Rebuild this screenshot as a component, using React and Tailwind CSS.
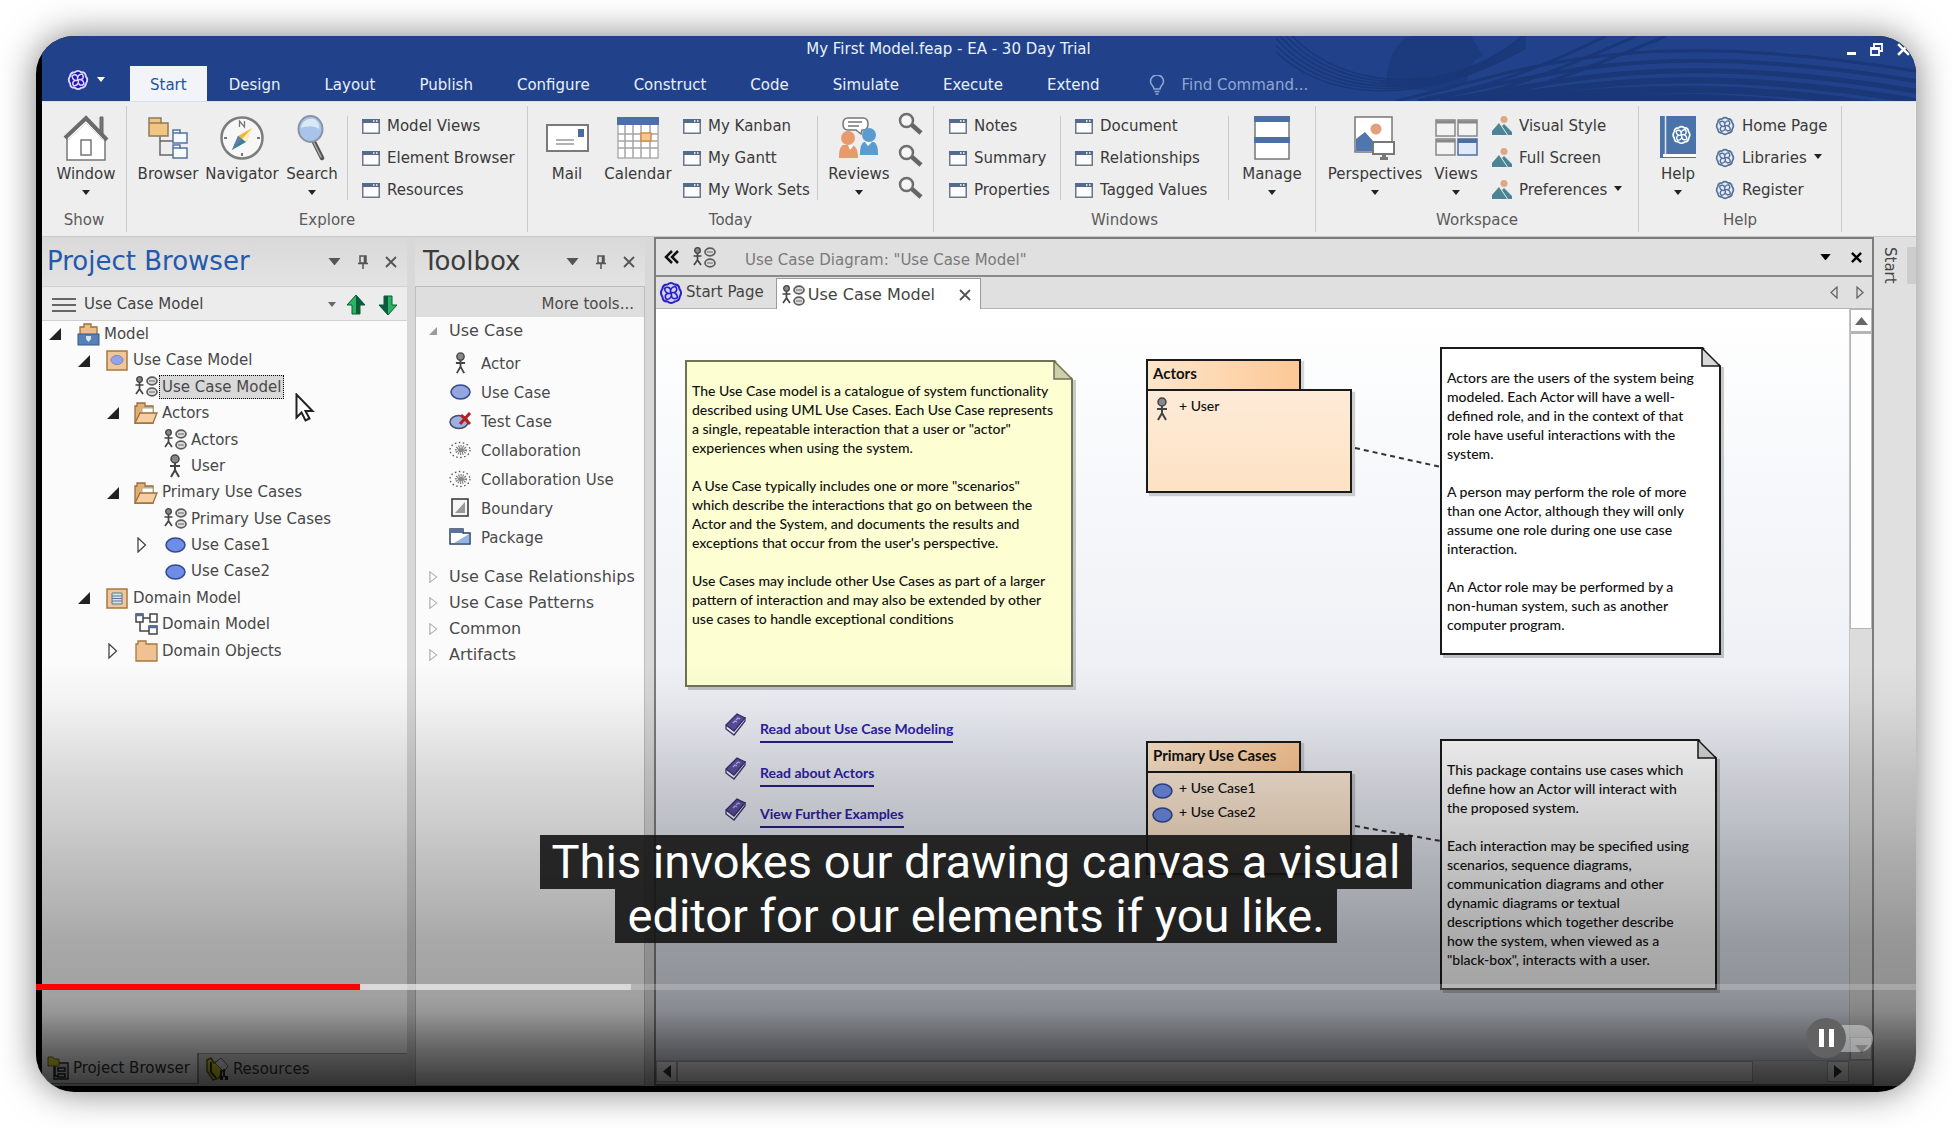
import React from "react";

/* ---------- icons ---------- */

const KnotShape = ({ color, bg = "none" }) => (
  <g fill="none" stroke={color} strokeLinecap="round">
    <path
      fill={bg}
      strokeWidth="2"
      strokeLinejoin="round"
      d="M8.500 3.500Q12 .5 15.500 3.500Q20 3.200 20.500 8Q23.500 11.500 20.800 15.500Q20.500 20 15.800 20.500Q12 23.500 8.500 20.500Q3.500 20.500 3.500 16Q.5 12 3.300 8Q3.800 3.500 8.500 3.500z"
    />
    {[0, 90, 180, 270].map((a) => (
      <path key={a} transform={`rotate(${a} 12 12)`} strokeWidth="1.700" d="M12 12C10.500 8.500 12.500 6 16.500 5.500C18.500 8 18 10.500 15.500 11.500" />
    ))}
  </g>
);

const Knot = ({ color = "#44648f", bg = "none", size = 22 }) => (
  <svg width={size} height={size} viewBox="0 0 24 24">
    <KnotShape color={color} bg={bg} />
  </svg>
);

const Caret = ({ className = "", w = 8, color = "#222" }) => (
  <svg className={className} width={w} height={w / 2 + 1} viewBox="0 0 8 5">
    <path d="M0 0h8L4 5z" fill={color} />
  </svg>
);

const House = () => (
  <svg width="46" height="46" viewBox="0 0 46 46">
    <path d="M37 2h3v18h-3z" fill="#777" stroke="#666" />
    <path d="M4 22 23 5l19 19v21H4z" fill="#fff" stroke="#777" strokeWidth="1.500" />
    <path d="M2 23 23 3l21 22" fill="none" stroke="#6b6b6b" strokeWidth="4" />
    <path d="M5 25 23 8l18 18" fill="none" stroke="#ddd" strokeWidth="1" />
    <rect x="18" y="25" width="10" height="15" fill="#fff" stroke="#777" strokeWidth="1.500" />
  </svg>
);

const BrowserIcon = () => (
  <svg width="40" height="42" viewBox="0 0 40 42">
    <path d="M12 18v20h14M12 24h14" fill="none" stroke="#666" strokeWidth="1.500" />
    <path d="M1 1h12v5h7v13H1z" fill="#f2c583" stroke="#8f7a5b" strokeWidth="1.500" />
    <path d="M1 6h12" stroke="#8f7a5b" strokeWidth="1.500" />
    <path d="M25 13h7v3h7v10H25zM25 28h7v3h7v10H25z" fill="#f6f9ff" stroke="#56739f" strokeWidth="1.500" />
    <path d="M25 16h8M25 31h8" stroke="#56739f" strokeWidth="1.500" />
  </svg>
);

const Compass = () => (
  <svg width="44" height="44" viewBox="0 0 44 44">
    <circle cx="22" cy="22" r="20.500" fill="#f7f7f7" stroke="#7d7d7d" strokeWidth="2.500" />
    <path d="M19.500 11V5l5 6V5" fill="none" stroke="#777" strokeWidth="1.300" />
    <path d="M4 22h3M37 22h3M22 37v3" stroke="#777" strokeWidth="2" />
    <path d="M32 12 26 26l-8-6z" fill="#f0b63c" />
    <path d="M32 12 26 26l-4-3z" fill="#fff1b8" />
    <path d="M12 34l6-14 8 6z" fill="#3e7f97" />
    <path d="M12 34l6-14 4 3z" fill="#5d7fae" />
  </svg>
);

const SearchBig = () => (
  <svg width="30" height="46" viewBox="0 0 30 46">
    <path d="m17 27 8 16" stroke="#555" strokeWidth="4.500" strokeLinecap="round" />
    <path d="m17 28 7 14" stroke="#aaa" strokeWidth="1.500" strokeLinecap="round" />
    <ellipse cx="13.500" cy="14" rx="12" ry="13" fill="#a9c4e8" stroke="#8a93a3" strokeWidth="2" />
    <path d="M4 13C5 6 11 3 17 4c4 2 6 6 5 10-6-4-12-3-18-1z" fill="#dbe8f8" />
  </svg>
);

const Mail = () => (
  <svg width="43" height="28" viewBox="0 0 43 28">
    <rect x="1" y="1" width="41" height="26" fill="#fff" stroke="#7a7a7a" strokeWidth="2" />
    <rect x="32" y="5" width="6" height="8" fill="#4a6c9f" />
    <path d="M10 16h18M10 20h18" stroke="#999" strokeWidth="1.500" />
  </svg>
);

const CalendarIcon = () => (
  <svg width="42" height="42" viewBox="0 0 42 42">
    <rect x="1" y="1" width="40" height="40" fill="#fff" stroke="#8c8c8c" />
    <rect width="42" height="8" fill="#4c70a6" />
    <path d="M8 8v33M16 8v33M24 8v33M33 8v33M1 17h40M1 24h40M1 31h40" stroke="#a5a5a5" strokeWidth="1.500" />
    <rect x="24" y="16" width="10" height="8" fill="#f5c68e" stroke="#d18f4f" strokeWidth="1.500" />
  </svg>
);

const Reviews = () => (
  <svg width="40" height="42" viewBox="0 0 40 42">
    <path d="M9 1h15q5 0 5 6t-5 6h-1l-1 4-5-4H9q-5 0-5-6t5-6z" fill="#fff" stroke="#777" strokeWidth="1.500" />
    <path d="M9 5h14M9 9h11" stroke="#777" strokeWidth="1.500" />
    <path d="M21 38c0-8 1-11 4-13h10c3 2 4 5 4 13z" fill="#5a9bd0" />
    <circle cx="30" cy="18" r="7" fill="#5a9bd0" />
    <path d="M0 41c0-8 1-11 4-13h10c3 2 5 5 5 13z" fill="#e79a6c" />
    <circle cx="9" cy="21" r="7" fill="#e79a6c" />
    <path d="m9 28 2 5 4-5M26 25l3 4 4-4" fill="#fff" />
  </svg>
);

const Lens = () => (
  <svg width="25" height="24" viewBox="0 0 25 24">
    <circle cx="8.500" cy="8.500" r="6.500" fill="#f6f6f6" stroke="#6e6e6e" strokeWidth="2.500" />
    <path d="m14 13 9 8" stroke="#666" strokeWidth="4.500" />
  </svg>
);

const ManageIcon = () => (
  <svg width="36" height="44" viewBox="0 0 36 44">
    <rect x="1" y="1" width="34" height="42" fill="#fff" stroke="#777" strokeWidth="1.500" />
    <path d="M0 0h36v6H0zM0 21h36v6H0z" fill="#4c70a6" />
  </svg>
);

const Perspectives = () => (
  <svg width="42" height="44" viewBox="0 0 42 44">
    <rect x="1" y="1" width="37" height="35" fill="#fff" stroke="#777" strokeWidth="1.500" />
    <circle cx="22" cy="13" r="5.500" fill="#e2a07c" />
    <path d="M2 35V23l9-7 8 9v10z" fill="#4f76ad" />
    <rect x="19" y="26" width="21" height="12" fill="#fff" stroke="#777" strokeWidth="2" />
    <path d="M28 38h4v3h2v3h-8v-3h2z" fill="#777" />
  </svg>
);

const ViewsIcon = () => (
  <svg width="43" height="38" viewBox="0 0 43 38">
    {[[1, 1], [23, 1], [1, 20]].map(([x, y]) => (
      <g key={`${x}-${y}`}>
        <rect x={x} y={y} width="19" height="16" fill="#f3f3f3" stroke="#888" strokeWidth="1.500" />
        <path d={`M${x} ${y + 2}h19`} stroke="#888" strokeWidth="3" />
      </g>
    ))}
    <rect x="23" y="20" width="19" height="16" fill="#dfeaf8" stroke="#4c6ea3" strokeWidth="1.500" />
    <path d="M23 22h19" stroke="#4c6ea3" strokeWidth="4" />
  </svg>
);

const HelpBook = () => (
  <svg width="36" height="44" viewBox="0 0 36 44">
    <path d="M0 0h36v42H0z" fill="#4a74a9" />
    <path d="M5.500 0v38" stroke="#dfe8f4" strokeWidth="1.500" />
    <path d="M3 38h33v3H3z" fill="#fff" />
    <g transform="translate(11.500 9) scale(.83)"><KnotShape color="#fff" /></g>
  </svg>
);

const WinIcon = () => (
  <svg width="18" height="15" viewBox="0 0 18 15">
    <rect x=".75" y=".75" width="16.500" height="13.500" fill="#fafcff" stroke="#6e7785" strokeWidth="1.500" />
    <path d="M0 0h18v4H0z" fill="#566b8c" />
    <path d="M11 2h1.500M14 2h1.500" stroke="#fff" strokeWidth="1.500" />
  </svg>
);

const Scene = () => (
  <svg width="20" height="20" viewBox="0 0 20 20">
    <circle cx="12" cy="3.500" r="3.500" fill="#dda884" />
    <path d="M0 19v-4l7-8 8 12z" fill="#4b8495" />
    <path d="m10 10 2-2 8 8v3h-4z" fill="#4b8495" />
  </svg>
);

const Pin = () => (
  <svg width="12" height="14" viewBox="0 0 12 14" fill="none" stroke="#555" strokeWidth="1.500">
    <path d="M3 1h6v7H3zM1 8.500h10M6 9v5M7.500 1v7" />
  </svg>
);

const Cross = ({ size = 12, color = "#555", sw = 1.8 }) => (
  <svg width={size} height={size} viewBox="0 0 12 12" stroke={color} strokeWidth={sw}>
    <path d="m1 1 10 10M11 1 1 11" />
  </svg>
);

const GreenArrow = ({ down }) => (
  <svg width="20" height="22" viewBox="0 0 20 22">
    <g transform={down ? "rotate(180 10 11)" : undefined}>
      <path d="M10 1 1 11h5v9h8v-9h5z" fill="#27b565" stroke="#0a5c36" strokeWidth="1" />
      <path d="M10 1 19 11h-5v9h-4z" fill="#0a5c3a" />
    </g>
  </svg>
);

const Root = () => (
  <svg width="23" height="23" viewBox="0 0 23 23">
    <path d="M3 12V4h4V1h7v3h6v8z" fill="#ecbd88" stroke="#9a6f3b" strokeWidth="1.300" />
    <rect x="1" y="11" width="21" height="11" fill="#5580b8" stroke="#36588a" />
    <path d="M9 13h5v3l-2.500 3L9 16z" fill="#d7e4f5" />
  </svg>
);

const BoxIcon = ({ doc }) => (
  <svg width="22" height="21" viewBox="0 0 22 21">
    <rect x="1" y="1" width="20" height="19" fill="#f0c597" stroke="#a67843" strokeWidth="1.500" />
    {doc ? (
      <path d="M6 5h10v11H6zM6 8h10M6 10.500h10M6 13h10" fill="#d5e3ee" stroke="#587991" />
    ) : (
      <ellipse cx="11" cy="10" rx="6" ry="4.500" fill="#94a4ea" stroke="#7a85c4" />
    )}
  </svg>
);

const UseCaseDiagramIcon = () => (
  <svg width="23" height="21" viewBox="0 0 23 21" fill="none">
    <circle cx="4.500" cy="3.500" r="2.800" fill="#888" stroke="#444" strokeWidth="1.300" />
    <path d="M4.500 6.500V13M.5 9h8M4.500 13 1 18M4.500 13l3.500 5" stroke="#444" strokeWidth="1.700" />
    <ellipse cx="17" cy="5" rx="5" ry="3.800" fill="#ddd" stroke="#5c5c5c" strokeWidth="1.700" />
    <ellipse cx="17" cy="16" rx="5" ry="3.800" fill="#ddd" stroke="#5c5c5c" strokeWidth="1.700" />
    <path d="M14 5h6M14 16h6" stroke="#666" />
  </svg>
);

const OpenFolder = () => (
  <svg width="24" height="22" viewBox="0 0 24 22">
    <path d="M1 21V4h2V1h8v3h8v17z" fill="#e3ae72" stroke="#9a6f3b" strokeWidth="1.300" />
    <path d="M8 6h11v8H8z" fill="#fff" stroke="#aaa" />
    <path d="m1 21 5-10h17l-4 10z" fill="#f5cfa2" stroke="#9a6f3b" strokeWidth="1.300" />
  </svg>
);

const Folder = () => (
  <svg width="23" height="22" viewBox="0 0 23 22">
    <path d="M1 21V4h2V1h8v3h11v17z" fill="#f0c293" stroke="#a67843" strokeWidth="1.300" />
  </svg>
);

const Person = ({ h = 24 }) => (
  <svg width={h / 2} height={h} viewBox="0 0 12 24" fill="none">
    <circle cx="6" cy="5" r="4" fill="#888" stroke="#444" strokeWidth="1.500" />
    <path d="M6 9v7M1 12h10M6 16l-4 7M6 16l4 7" stroke="#444" strokeWidth="2" />
  </svg>
);

const Oval = ({ fill = "#6d8de6" }) => (
  <svg width="21" height="16" viewBox="0 0 21 16">
    <ellipse cx="10.500" cy="8" rx="9.500" ry="7" fill={fill} stroke="#34488f" strokeWidth="1.500" />
  </svg>
);

const TestCase = () => (
  <svg width="23" height="18" viewBox="0 0 23 18">
    <ellipse cx="10" cy="10" rx="9" ry="6.500" fill="#9bb2e0" stroke="#444c66" strokeWidth="1.500" />
    <path d="m12 3 9 9M21 1 11 12" stroke="#b81f1f" strokeWidth="3" />
  </svg>
);

const Collab = () => (
  <svg width="22" height="18" viewBox="0 0 22 18">
    <ellipse cx="11" cy="9" rx="10" ry="7.500" fill="none" stroke="#555" strokeWidth="1.300" strokeDasharray="1.500 2.500" />
    <ellipse cx="12" cy="9" rx="3" ry="2" fill="#888" />
    <ellipse cx="12" cy="9" rx="4.500" ry="3.500" fill="none" stroke="#777" strokeWidth="3" strokeDasharray="1 1" />
  </svg>
);

const Boundary = () => (
  <svg width="18" height="19" viewBox="0 0 18 19">
    <rect x="1" y="1" width="16" height="17" fill="#f5f5f5" stroke="#333" strokeWidth="1.500" />
    <path d="M4 15 14 4v11z" fill="#999" />
  </svg>
);

const PackageIcon = () => (
  <svg width="22" height="17" viewBox="0 0 22 17">
    <path d="M1 1h13v4h7v11H1z" fill="#fff" stroke="#2b4168" strokeWidth="1.500" />
    <path d="M1 1h13v4H1z" fill="#5a739c" />
    <path d="M5 15 20 6v9z" fill="#93b5e4" />
  </svg>
);

const ClassDiagram = () => (
  <svg width="23" height="22" viewBox="0 0 23 22" fill="#fff" stroke="#444" strokeWidth="1.500">
    <path d="M8 5h8M5 9v9h9" fill="none" />
    <path d="M1 1h7v8H1zM15 1h7v8h-7zM14 13h8v8h-8z" />
    <path d="M1 2h7M14 14h8" stroke="#4c6ea3" strokeWidth="2.500" />
  </svg>
);

const BookIcon = () => (
  <svg width="21" height="23" viewBox="0 0 21 23">
    <path d="M1 13v3l8 6L20 8V5z" fill="#f4f4fa" stroke="#3a3470" strokeWidth="1.300" />
    <path d="M1 12 12 1l8 4L9 18z" fill="#5b509f" stroke="#37306f" strokeWidth="1.300" />
    <path d="m8 10 2-2 2 1M11 7l2-2 2 1" fill="none" stroke="#b8b2e0" strokeWidth="1.300" />
  </svg>
);

const Expander = ({ open, light }) => {
  if (open) {
    const s = light ? 8 : 12;
    return <svg width={s} height={s} viewBox="0 0 12 12"><path d="M12 0v12H0z" fill={light ? "#9a9a9a" : "#222"} /></svg>;
  }
  return (
    <svg width={light ? 9 : 10} height={light ? 12 : 16} viewBox="0 0 10 16" preserveAspectRatio="none">
      <path d="m1 1 7.500 7L1 15z" fill="#fff" stroke={light ? "#aaa" : "#444"} strokeWidth="1.300" />
    </svg>
  );
};

/* ---------- ribbon ---------- */

const BigButton = ({ icon, label, arrow, className }) => (
  <button className={`flex h-full shrink-0 flex-col items-center pt-2 ${className}`}>
    <span className="flex h-12 items-center justify-center">{icon}</span>
    <span className="leading-6 whitespace-nowrap">{label}</span>
    {arrow && <Caret className="mt-1" />}
  </button>
);

const SmallList = ({ items, className = "" }) => (
  <div className={`flex shrink-0 flex-col pt-1 ${className}`}>
    {items.map(([icon, label, arrow]) => (
      <button key={label} className="flex h-8 items-center gap-[7px] whitespace-nowrap">
        {icon}
        <span>{label}</span>
        {arrow && <Caret className="mb-1" />}
      </button>
    ))}
  </div>
);

const Divider = () => <div className="mt-[10px] h-[84px] w-px shrink-0 bg-[#c9c9c9]" />;

const Group = ({ label, className, children }) => (
  <section className={`my-1 flex shrink-0 flex-col border-r border-[#cccccc] ${className}`}>
    <div className="flex h-[102px]">{children}</div>
    <h2 className="text-center leading-6 text-[#5a5a5a]">{label}</h2>
  </section>
);

const win = <WinIcon />;
const knot = <Knot size={20} color="#54719b" bg="#e6edf7" />;

function Ribbon() {
  return (
    <div className="flex h-[135px] shrink-0 overflow-hidden border-t border-[#d5e0f5] bg-[#eeeeee] text-[#3a3a3a]">
      <Group label="Show" className="w-[85px]">
        <BigButton icon={<House />} label="Window" arrow className="w-[88px]" />
      </Group>
      <Group label="Explore" className="w-[401px]">
        <BigButton icon={<BrowserIcon />} label="Browser" className="ml-[6px] w-[70px]" />
        <BigButton icon={<Compass />} label="Navigator" className="w-[78px]" />
        <BigButton icon={<SearchBig />} label="Search" arrow className="mr-1 w-[62px]" />
        <Divider />
        <SmallList className="ml-[14px]" items={[[win, "Model Views"], [win, "Element Browser"], [win, "Resources"]]} />
      </Group>
      <Group label="Today" className="w-[406px]">
        <BigButton icon={<Mail />} label="Mail" className="ml-[5px] w-[68px]" />
        <BigButton icon={<CalendarIcon />} label="Calendar" className="w-[74px]" />
        <SmallList className="ml-2 w-[134px]" items={[[win, "My Kanban"], [win, "My Gantt"], [win, "My Work Sets"]]} />
        <Divider />
        <BigButton icon={<Reviews />} label="Reviews" arrow className="ml-[2px] w-[78px]" />
        <div className="flex flex-col pt-[2px]">
          {["Find reviews", "Find discussions", "Find comments"].map((l) => (
            <button key={l} aria-label={l} className="flex h-8 items-center"><Lens /></button>
          ))}
        </div>
      </Group>
      <Group label="Windows" className="w-[382px]">
        <SmallList className="ml-[15px] w-[111px]" items={[[win, "Notes"], [win, "Summary"], [win, "Properties"]]} />
        <Divider />
        <SmallList className="ml-[14px] w-[153px]" items={[[win, "Document"], [win, "Relationships"], [win, "Tagged Values"]]} />
        <Divider />
        <BigButton icon={<ManageIcon />} label="Manage" arrow className="w-[86px]" />
      </Group>
      <Group label="Workspace" className="w-[323px]">
        <BigButton icon={<Perspectives />} label="Perspectives" arrow className="ml-[7px] w-[104px]" />
        <BigButton icon={<ViewsIcon />} label="Views" arrow className="w-[58px]" />
        <SmallList className="ml-[7px]" items={[[<Scene />, "Visual Style"], [<Scene />, "Full Screen"], [<Scene />, "Preferences", true]]} />
      </Group>
      <Group label="Help" className="w-[203px]">
        <BigButton icon={<HelpBook />} label="Help" arrow className="ml-[9px] w-[60px]" />
        <SmallList className="ml-[7px]" items={[[knot, "Home Page"], [knot, "Libraries", true], [knot, "Register"]]} />
      </Group>
    </div>
  );
}

/* ---------- title bar ---------- */

const Waves = () => (
  <svg className="absolute top-0 right-0 h-full w-[640px]" viewBox="0 0 640 65" preserveAspectRatio="none" fill="none" stroke="#1a3777">
    <path d="M110 50Q112 8 135 0h60q6 10 12 20-14 4-16 26-20 10-30 10z" fill="#1c3b7e" stroke="none" />
    {[0, 6, 12, 18, 24, 30].map((d) => (
      <path key={d} d={`M${-14 + d} 0C${40 + d} ${72 - d / 2} ${150 + d} ${70 - d / 3} 250 ${12 - d / 2}`} strokeWidth="1.500" />
    ))}
    {[0, 1, 2, 3, 4, 5].map((d) => (
      <path key={d} d={`M${120 + d * 22} 65C${240 + d * 22} ${38 + d * 5} ${340 + d * 20} ${-14 + d * 13} 640 ${35 + d * 10}`} strokeWidth={3 + d} />
    ))}
    <path d="M150 62Q230 50 330 0M180 64Q250 50 360 0M210 65Q270 50 390 0" strokeWidth="3" />
  </svg>
);

const menus = ["Design", "Layout", "Publish", "Configure", "Construct", "Code", "Simulate", "Execute", "Extend"];

function TitleBar() {
  return (
    <header className="relative flex h-[65px] shrink-0 flex-col justify-between overflow-hidden bg-[#21428a] text-[#e8f0fb]">
      <Waves />
      <div className="relative flex h-[26px] items-center pr-[6px]">
        <h1 className="flex-1 pl-2 text-center">My First Model.feap - EA - 30 Day Trial</h1>
        <div className="flex items-center gap-[14px]">
          <button aria-label="Minimize" className="mt-2 h-[3px] w-[9px] bg-white" />
          <button aria-label="Restore">
            <svg width="13" height="13" viewBox="0 0 13 13" fill="none" stroke="#fff" strokeWidth="1.800"><path d="M4 4V1h8v7H9M1 5h8v7H1zM1 6h8" /></svg>
          </button>
          <button aria-label="Close"><Cross size={13} color="#fff" sw={2.4} /></button>
        </div>
      </div>
      <div className="relative flex h-[35px]">
        <button aria-label="Application menu" className="flex w-[88px] items-center gap-2 pb-2 pl-[25px]">
          <Knot size={22} color="#dcd8ff" bg="#2014b4" />
          <Caret color="#fff" />
        </button>
        <nav className="flex">
          <button className="bg-[#f2f4f8] px-5 pt-[3px] text-[#1d559f]">Start</button>
          {menus.map((m) => <button key={m} className="px-[22px] pt-[3px]">{m}</button>)}
        </nav>
        <label className="ml-7 flex items-center gap-4 pt-[3px] text-[#8fa6d3]">
          <svg width="16" height="20" viewBox="0 0 16 20" fill="none" stroke="#8fa6d3" strokeWidth="1.500"><path d="M5 14C5 11 1.500 10 1.500 6.500a6 6 0 0 1 13 0C14.500 10 11 11 11 14zM5.500 16.500h5M6.500 19h3" /></svg>
          <input aria-label="Find Command" placeholder="Find Command..." className="w-[160px] bg-transparent outline-none placeholder:text-[#8fa6d3]" />
        </label>
      </div>
    </header>
  );
}

/* ---------- docked panels ---------- */

const PanelHeader = ({ title, className }) => (
  <div className="flex h-[49px] shrink-0 items-center bg-gradient-to-b from-[#d9d9d9] to-[#e3e3e3]">
    <h2 className={`flex-1 text-[26px] whitespace-nowrap ${className}`}>{title}</h2>
    <div className="flex items-center gap-4 pr-[10px]">
      <button aria-label="Panel options"><Caret w={13} color="#555" /></button>
      <button aria-label="Pin panel"><Pin /></button>
      <button aria-label="Close panel"><Cross /></button>
    </div>
  </div>
);

const tree = [
  [0, "open", <Root />, "Model"],
  [1, "open", <BoxIcon />, "Use Case Model"],
  [2, "", <UseCaseDiagramIcon />, "Use Case Model", true],
  [2, "open", <OpenFolder />, "Actors"],
  [3, "", <UseCaseDiagramIcon />, "Actors"],
  [3, "", <Person />, "User"],
  [2, "open", <OpenFolder />, "Primary Use Cases"],
  [3, "", <UseCaseDiagramIcon />, "Primary Use Cases"],
  [3, "closed", <Oval />, "Use Case1"],
  [3, "", <Oval />, "Use Case2"],
  [1, "open", <BoxIcon doc />, "Domain Model"],
  [2, "", <ClassDiagram />, "Domain Model"],
  [2, "closed", <Folder />, "Domain Objects"],
];

function ProjectBrowser() {
  return (
    <aside className="flex w-[365px] shrink-0 flex-col bg-[#fbfbfb]">
      <PanelHeader title="Project Browser" className="pl-[5px] text-[#2358ad]" />
      <div className="flex h-[35px] shrink-0 items-center border-y border-[#d0d0d0] bg-[#ececec] pt-[2px] pl-[10px] text-[#444]">
        <button aria-label="Menu" className="flex w-6 flex-col gap-1">
          <span className="h-[2px] bg-[#666]" /><span className="h-[2px] bg-[#666]" /><span className="h-[2px] bg-[#666]" />
        </button>
        <button className="flex flex-1 items-center justify-between pl-2">Use Case Model<Caret color="#666" /></button>
        <button aria-label="Move up" className="ml-[10px]"><GreenArrow /></button>
        <button aria-label="Move down" className="mr-[9px] ml-3"><GreenArrow down /></button>
      </div>
      <ul className="flex h-[343px] shrink-0 flex-col text-[#484848]">
        {tree.map(([level, state, icon, label, selected], i) => (
          <li key={i} className="flex flex-1 items-center" style={{ paddingLeft: level * 29 }}>
            <span className="mr-[7px] flex w-[26px] justify-center">{state && <Expander open={state === "open"} />}</span>
            <span className="flex w-[26px] items-center justify-center">{icon}</span>
            <span className={selected ? "border border-dotted border-black bg-[#d9d9d9] px-[2px] leading-[22px]" : "pl-[3px]"}>{label}</span>
          </li>
        ))}
      </ul>
      <div className="flex-1" />
      <div className="flex h-[33px] shrink-0 bg-[#dcdcdc] text-[#333]">
        <button className="mb-[2px] flex items-center gap-1 border-r-2 border-b border-[#999] bg-[#fbfbfb] pr-[7px] pl-[5px]">
          <svg width="22" height="24" viewBox="0 0 22 24"><path d="M7 7h14v16H7z" fill="#c9d6f2" stroke="#333" strokeWidth="1.500" /><path d="M11 12h7v3h-7zM11 18h7v3h-7zM8 9v11h3" fill="#e8eefb" stroke="#222" strokeWidth="1.500" /><path d="M1 1h5l1 2h5v7H1z" fill="#e3d93c" stroke="#77701a" /></svg>
          Project Browser
        </button>
        <button className="flex flex-1 items-center gap-1 border-t border-[#aaa] pb-[2px] pl-[7px]">
          <svg width="23" height="24" viewBox="0 0 23 24"><path d="M1 3 5 1l3 5 4-2 5 9-4 8-6 2L1 14z" fill="#d9cf33" stroke="#625b12" strokeWidth="1.500" /><path d="m9 6 6-5 7 8-4 6z" fill="#e8e8f2" stroke="#666" /><path d="M5 5v10l5 6M18 12v8M15 13v6" stroke="#222" strokeWidth="1.800" fill="none" /><path d="M14 21h3M19 21h3" stroke="#222" strokeWidth="4" /></svg>
          Resources
        </button>
      </div>
    </aside>
  );
}

const tools = [
  [<Person h={22} />, "Actor"],
  [<Oval fill="#93a7de" />, "Use Case"],
  [<TestCase />, "Test Case"],
  [<Collab />, "Collaboration"],
  [<Collab />, "Collaboration Use"],
  [<Boundary />, "Boundary"],
  [<PackageIcon />, "Package"],
];

function Toolbox() {
  return (
    <aside className="ml-2 flex w-[230px] shrink-0 flex-col bg-[#fbfbfb] text-[#4a4a4a]">
      <PanelHeader title="Toolbox" className="pl-2 text-[#3c3c3c]" />
      <div className="flex min-h-0 flex-1 flex-col overflow-hidden border border-[#bdbdbd] bg-[#fbfbfb]">
        <button className="flex h-[30px] shrink-0 items-center justify-end bg-[#dedede] pt-1 pr-[10px]">More tools...</button>
        <button className="flex h-[28px] shrink-0 items-center text-[16px]">
          <span className="ml-[13px] w-5"><Expander open light /></span>Use Case
        </button>
        <ul className="pt-[5px] pb-[11px]">
          {tools.map(([icon, label]) => (
            <li key={label}>
              <button className="flex h-[29px] items-center">
                <span className="ml-8 flex w-6 justify-center pb-1">{icon}</span>
                <span className="pl-[9px]">{label}</span>
              </button>
            </li>
          ))}
        </ul>
        {["Use Case Relationships", "Use Case Patterns", "Common", "Artifacts"].map((t) => (
          <button key={t} className="flex h-[26px] shrink-0 items-center text-[16px] whitespace-nowrap">
            <span className="ml-[13px] w-5 shrink-0"><Expander light /></span>{t}
          </button>
        ))}
      </div>
    </aside>
  );
}

/* ---------- diagram ---------- */

const Note = ({ className, fill, stroke, fold, children }) => (
  <article className={`absolute font-['Lato',sans-serif] text-[14px] leading-[19px] font-medium text-[#111] ${className}`}>
    <svg className="absolute inset-0 size-full overflow-visible" aria-hidden="true">
      <rect x="3" y="20" width="100%" height="calc(100% - 17px)" fill="#000" opacity=".2" />
    </svg>
    <div className={`absolute inset-0 border-2 [clip-path:polygon(0_0,calc(100%-18px)_0,100%_19px,100%_100%,0_100%)] ${fill}`} />
    <svg className="absolute top-0 right-0" width="20" height="20" viewBox="0 0 20 20">
      <path d="M1 1v18h18z" fill={fold} stroke={stroke} strokeWidth="1.500" />
    </svg>
    <div className="relative pt-[21px] pl-[7px] whitespace-pre">{children}</div>
  </article>
);

const Package = ({ title, className, children }) => (
  <article className={`absolute w-[206px] font-['Lato',sans-serif] text-[#111] ${className}`}>
    <h3 className="h-[30px] w-[155px] border-2 border-b-0 border-[#1a1a1a] bg-gradient-to-r from-[#fde6cc] to-[#fcc895] pl-[5px] text-[15px] leading-[25px] font-bold shadow-[3px_2px_1px_rgba(0,0,0,0.15)]">{title}</h3>
    <ul className="h-[104px] border-2 border-[#1a1a1a] bg-gradient-to-b from-[#fdebd8] to-[#fde2c4] pt-[2px] pl-[3px] text-[14px] font-medium shadow-[3px_3px_1px_rgba(0,0,0,0.18)]">{children}</ul>
  </article>
);

const Member = ({ icon, label }) => (
  <li className="flex h-6 items-center">
    <span className="flex w-[22px] justify-center pt-2">{icon}</span>
    <span className="pl-[6px]">+ {label}</span>
  </li>
);

const noteUseCases = `The Use Case model is a catalogue of system functionality
described using UML Use Cases. Each Use Case represents
a single, repeatable interaction that a user or "actor"
experiences when using the system.

A Use Case typically includes one or more "scenarios"
which describe the interactions that go on between the
Actor and the System, and documents the results and
exceptions that occur from the user's perspective.

Use Cases may include other Use Cases as part of a larger
pattern of interaction and may also be extended by other
use cases to handle exceptional conditions`;

const noteActors = `Actors are the users of the system being
modeled. Each Actor will have a well-
defined role, and in the context of that
role have useful interactions with the
system.

A person may perform the role of more
than one Actor, although they will only
assume one role during one use case
interaction.

An Actor role may be performed by a
non-human system, such as another
computer program.`;

const notePrimary = `This package contains use cases which
define how an Actor will interact with
the proposed system.

Each interaction may be specified using
scenarios, sequence diagrams,
communication diagrams and other
dynamic diagrams or textual
descriptions which together describe
how the system, when viewed as a
"black-box", interacts with a user.`;

const DocLink = ({ className, children }) => (
  <a href="#docs" className={`absolute flex items-start gap-[14px] font-['Lato',sans-serif] text-[14px] leading-5 font-bold text-[#2f21a8] ${className}`}>
    <BookIcon />
    <span className="mt-[6px] border-b-2 border-[#2a2080] pb-[2px] whitespace-nowrap">{children}</span>
  </a>
);

const Canvas = () => (
  <div className="relative min-w-0 flex-1 overflow-hidden bg-gradient-to-b from-[#ffffff] to-[#dce1ec]">
    <Note className="top-[51px] left-[29px] h-[327px] w-[388px]" fill="border-[#6f7355] bg-[#fdffd3]" fold="#cdd0aa" stroke="#6f7355">{noteUseCases}</Note>
    <DocLink className="top-[404px] left-[69px]">Read about Use Case Modeling</DocLink>
    <DocLink className="top-[448px] left-[69px]">Read about Actors</DocLink>
    <DocLink className="top-[489px] left-[69px]">View Further Examples</DocLink>

    <Package title="Actors" className="top-[50px] left-[490px]">
      <Member icon={<Person h={24} />} label="User" />
    </Package>
    <Package title="Primary Use Cases" className="top-[432px] left-[490px]">
      <Member icon={<Oval />} label="Use Case1" />
      <Member icon={<Oval />} label="Use Case2" />
    </Package>

    <svg className="absolute top-[138px] left-[698px]" width="88" height="22"><path d="M1 1 87 20" stroke="#333" strokeWidth="2" strokeDasharray="5 4" /></svg>
    <svg className="absolute top-[516px] left-[698px]" width="88" height="18"><path d="M1 1 87 16" stroke="#333" strokeWidth="2" strokeDasharray="5 4" /></svg>

    <Note className="top-[38px] left-[784px] h-[308px] w-[281px]" fill="border-[#1a1a1a] bg-white" fold="#d8d8d8" stroke="#1a1a1a">{noteActors}</Note>
    <Note className="top-[430px] left-[784px] h-[251px] w-[277px]" fill="border-[#1a1a1a] bg-white" fold="#d8d8d8" stroke="#1a1a1a">{notePrimary}</Note>
  </div>
);

function DiagramWindow() {
  return (
    <main className="ml-[9px] flex min-w-0 flex-1 flex-col border-2 border-[#7c7c7c] bg-[#e0e0e0]">
      <div className="flex h-[38px] shrink-0 items-center border-b-2 border-[#8a8a8a] pr-[10px] pl-2 text-[#7a7a7a]">
        <button aria-label="Collapse">
          <svg width="16" height="16" viewBox="0 0 16 16" fill="none" stroke="#111" strokeWidth="2.500"><path d="M8 2 2 8l6 6M14 2 8 8l6 6" /></svg>
        </button>
        <span className="ml-[13px]"><UseCaseDiagramIcon /></span>
        <h2 className="flex-1 pt-[6px] pl-[29px]">Use Case Diagram: "Use Case Model"</h2>
        <button aria-label="Window list" className="mr-5"><Caret w={11} color="#000" /></button>
        <button aria-label="Close window"><Cross size={11} color="#000" sw={2.600} /></button>
      </div>
      <div className="flex h-8 shrink-0 items-end border-b border-[#b5b5b5] pr-2 text-[#444]">
        <button className="flex h-[31px] items-center gap-[3px] pr-[12px] pl-[3px]"><Knot size={24} color="#2c1fc0" bg="#cfd2ff" />Start Page</button>
        <div className="-mb-px flex h-[31px] items-center border border-b-0 border-[#9a9a9a] bg-white pt-[2px] pr-[9px] pl-[5px] text-[16px]">
          <button className="flex items-center gap-[3px]"><UseCaseDiagramIcon />Use Case Model</button>
          <button aria-label="Close tab" className="ml-6"><Cross /></button>
        </div>
        <div className="ml-auto flex h-full items-center gap-[18px]">
          <button aria-label="Scroll tabs left"><svg width="8" height="13" viewBox="0 0 8 13"><path d="M7 1v11L1 6.500z" fill="none" stroke="#666" strokeWidth="1.300" /></svg></button>
          <button aria-label="Scroll tabs right"><svg width="8" height="13" viewBox="0 0 8 13"><path d="M1 1v11l6-5.500z" fill="none" stroke="#666" strokeWidth="1.300" /></svg></button>
        </div>
      </div>
      <div className="flex min-h-0 flex-1">
        <Canvas />
        <div className="flex w-[23px] shrink-0 flex-col border-l border-[#c4c4c4] bg-[#dcdcdc]">
          <button aria-label="Scroll up" className="flex h-[23px] items-center justify-center border border-[#b5b5b5] bg-[#fdfdfd]"><svg width="13" height="8"><path d="M6.500 0 13 8H0z" fill="#666" /></svg></button>
          <div className="h-[297px] border border-t-2 border-[#b5b5b5] bg-[#fdfdfd]" />
          <button aria-label="Scroll down" className="mt-auto flex h-[23px] items-center justify-center border border-[#b5b5b5] bg-[#fdfdfd]"><svg width="13" height="8"><path d="M6.500 8 13 0H0z" fill="#666" /></svg></button>
        </div>
      </div>
      <div className="flex h-[24px] shrink-0 border-t border-[#c4c4c4] pr-[23px] pb-[2px]">
        <button aria-label="Scroll left" className="flex w-[21px] items-center justify-center border border-[#b5b5b5] bg-[#fdfdfd]"><svg width="8" height="13"><path d="M8 0v13L0 6.500z" fill="#333" /></svg></button>
        <div className="flex-1 pr-[74px]"><div className="h-full border border-[#b5b5b5] bg-[#fdfdfd]" /></div>
        <button aria-label="Scroll right" className="flex w-[22px] items-center justify-center border border-[#b5b5b5] bg-[#fdfdfd]"><svg width="8" height="13"><path d="M0 0v13l8-6.500z" fill="#333" /></svg></button>
      </div>
    </main>
  );
}

/* ---------- video player layer ---------- */

const PlayerOverlay = () => (
  <>
    <div className="pointer-events-none absolute inset-x-0 top-0 bottom-[6px] bg-[linear-gradient(to_top,rgba(0,0,0,0.77)_1px,rgba(0,0,0,0.62)_34px,rgba(0,0,0,0.5)_56px,rgba(0,0,0,0.4)_74px,rgba(0,0,0,0.36)_89px,rgba(0,0,0,0.33)_146px,rgba(0,0,0,0.28)_186px,rgba(0,0,0,0.235)_226px,rgba(0,0,0,0.18)_266px,rgba(0,0,0,0.14)_306px,rgba(0,0,0,0.085)_346px,rgba(0,0,0,0.03)_386px,rgba(0,0,0,0)_424px)]" />
    <p className="absolute inset-x-0 bottom-[149px] text-center font-['Roboto',sans-serif] text-[47px] leading-[54px] text-white">
      <span className="inline-block bg-[#141414]/90 px-3">This invokes our drawing canvas a visual</span>
      <br />
      <span className="inline-block bg-[#141414]/90 px-3">editor for our elements if you like.</span>
    </p>
    <div role="progressbar" aria-label="Playback position" aria-valuenow={17} className="absolute inset-x-0 bottom-[102px] flex h-[6px] bg-white/20">
      <div className="w-[17.25%] bg-[#ff0000]" />
      <div className="w-[14.4%] bg-white/50" />
    </div>
    <button role="switch" aria-checked="false" aria-label="Autoplay" className="absolute right-[43px] bottom-[34px] flex h-10 w-[67px] items-center">
      <span className="absolute right-0 h-[27px] w-[50px] rounded-full bg-white/40" />
      <span className="relative flex size-10 items-center justify-center gap-[5px] rounded-full bg-[#626262]">
        <span className="h-[18px] w-[5px] bg-white" /><span className="h-[18px] w-[5px] bg-white" />
      </span>
    </button>
  </>
);

const Pointer = () => (
  <svg className="absolute top-[357px] left-[259px]" width="20" height="30" viewBox="0 0 20 30">
    <path d="M1.500 1.500v23l5-5 4 8 4-2-4-7.500h7z" fill="#fff" stroke="#222" strokeWidth="2" />
  </svg>
);

export default function App() {
  return (
    <div className="flex min-h-screen bg-white p-9">
      <div className="relative flex min-w-0 flex-1 flex-col overflow-hidden rounded-[38px] bg-black pb-[6px] pl-[6px] font-['DejaVu_Sans',sans-serif] text-[15px] shadow-[0_0_36px_rgba(0,0,0,0.5)]">
        <TitleBar />
        <Ribbon />
        <div className="flex min-h-0 flex-1 border-t border-[#c8c8c8] bg-[#d8d8d8]">
          <ProjectBrowser />
          <Toolbox />
          <DiagramWindow />
          <aside className="flex w-[42px] shrink-0 items-start justify-between bg-[#e0e0e0] pt-[10px] text-[#444]">
            <button className="pl-1 leading-[24px] [writing-mode:vertical-rl]">Start</button>
            <span className="h-[37px] w-[9px] bg-[#cdcdcd]" />
          </aside>
        </div>
        <Pointer />
        <PlayerOverlay />
      </div>
    </div>
  );
}
